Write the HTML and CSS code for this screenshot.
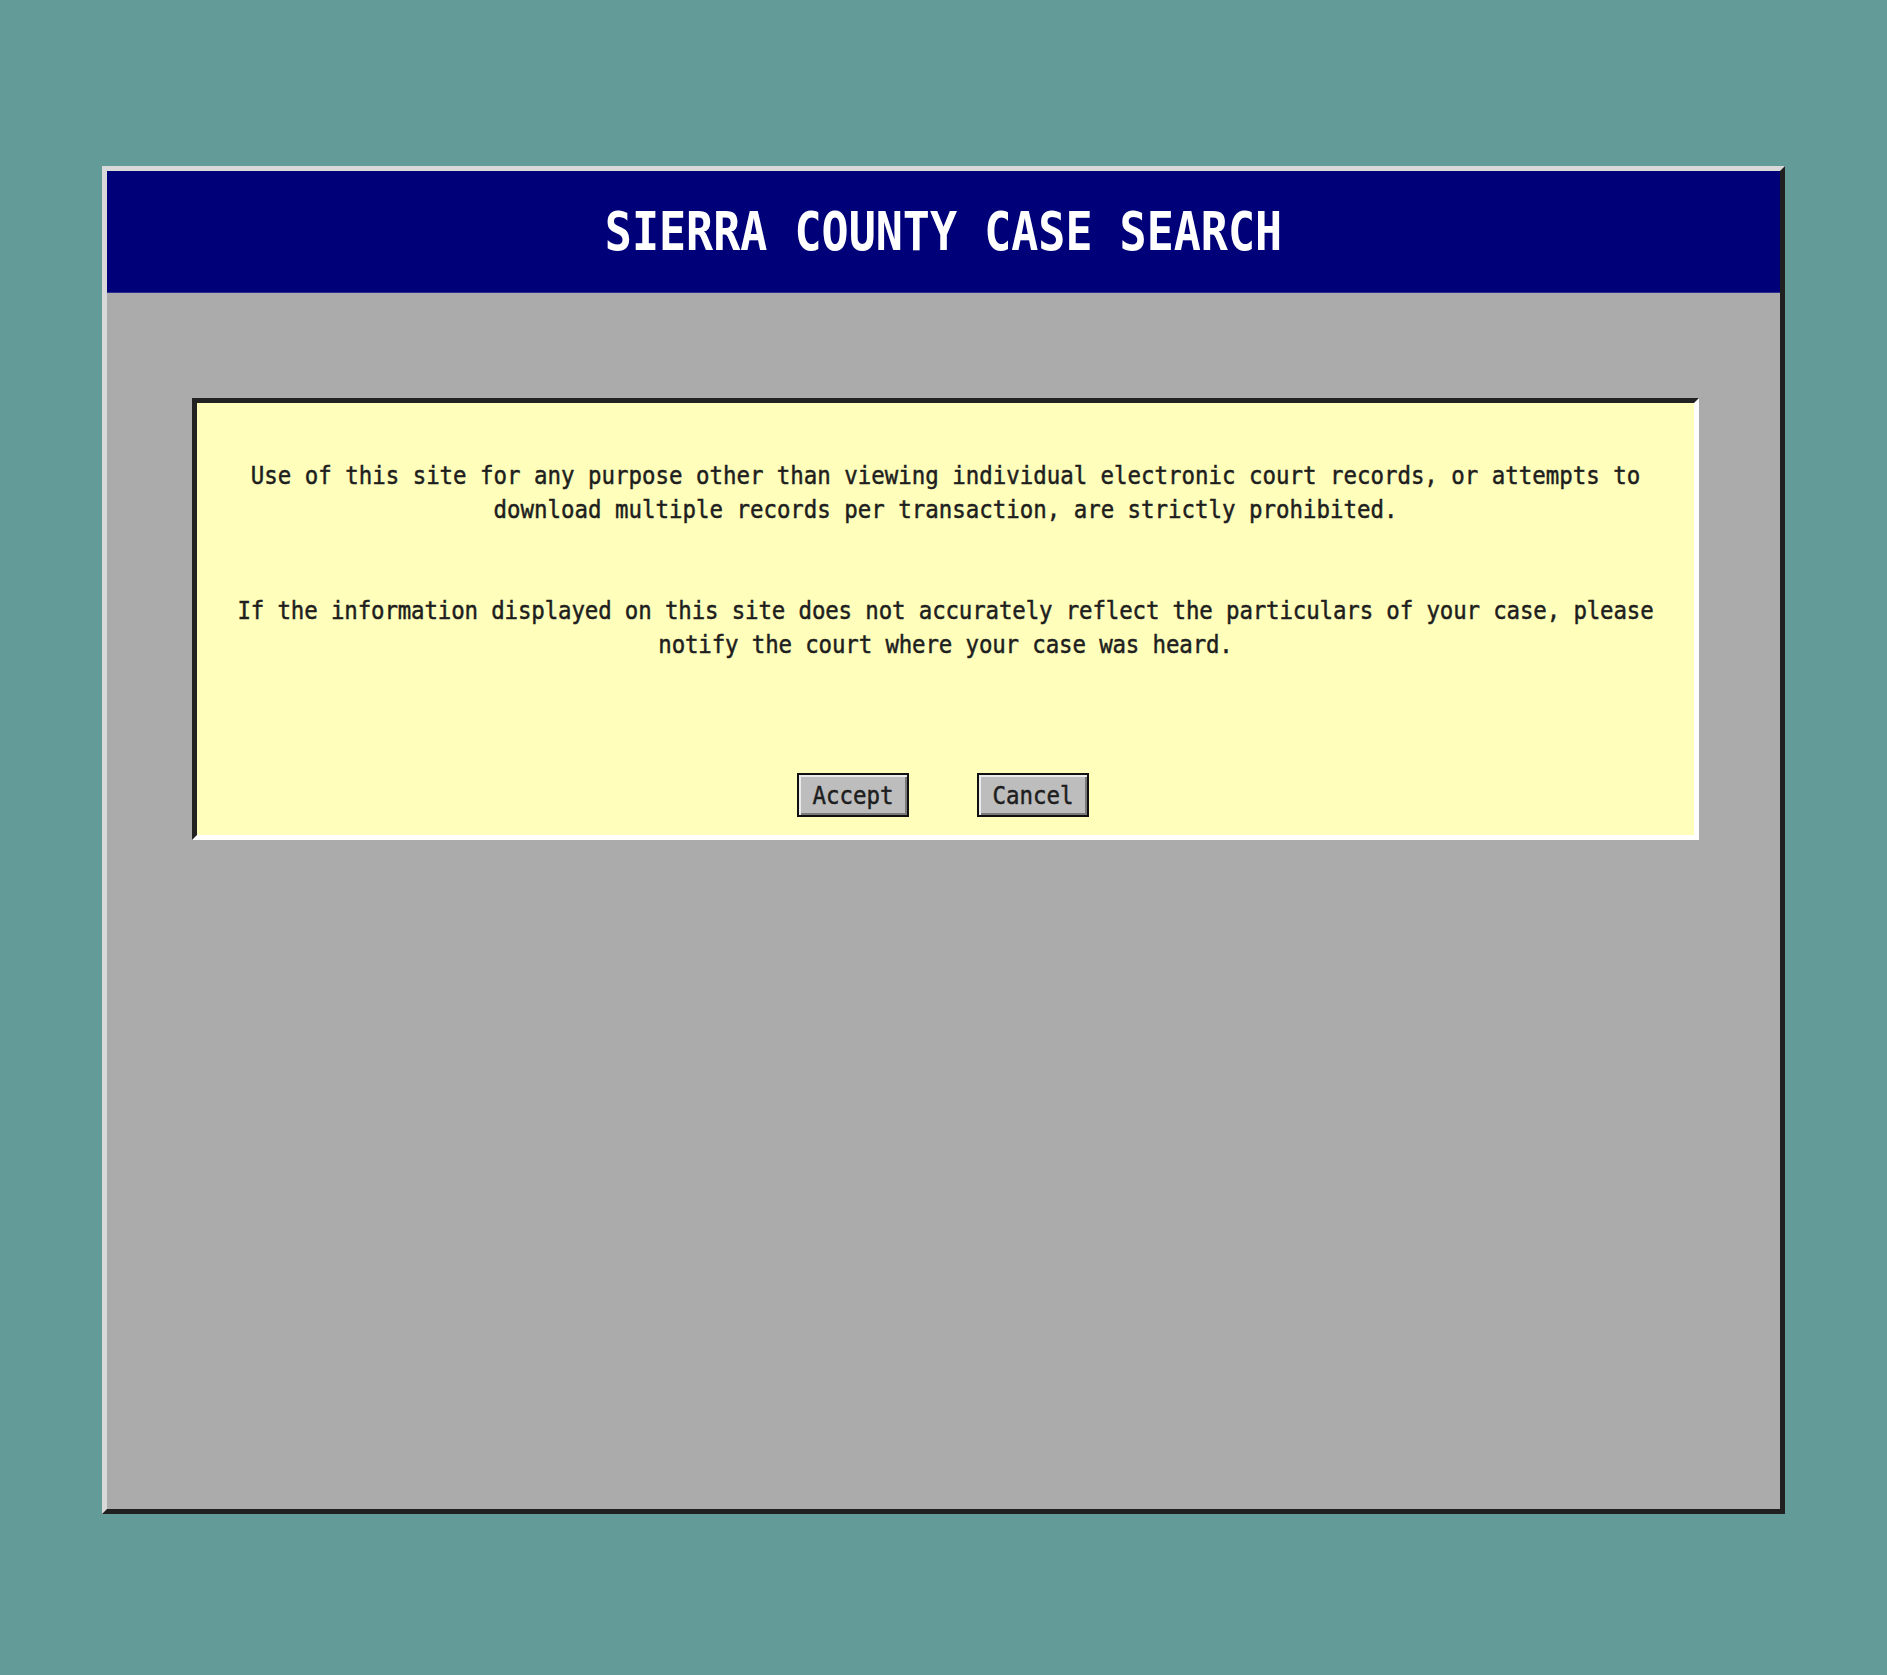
FILE: index.html
```html
<!DOCTYPE html>
<html lang="en">
<head>
<meta charset="utf-8">
<title>Sierra County Case Search</title>
<link rel="stylesheet" href="styles.css">
</head>
<body>
<div class="window">
  <div class="titlebar">
    <h1 class="title">SIERRA COUNTY CASE SEARCH</h1>
  </div>
  <div class="content">
    <div class="notice">
      <p class="msg first">Use of this site for any purpose other than viewing individual electronic court records, or attempts to download multiple records per transaction, are strictly prohibited.</p>
      <p class="msg second">If the information displayed on this site does not accurately reflect the particulars of your case, please notify the court where your case was heard.</p>
      <div class="actions">
        <button class="btn" type="button"><span class="btn-label">Accept</span></button>
        <button class="btn" type="button"><span class="btn-label">Cancel</span></button>
      </div>
    </div>
  </div>
</div>
</body>
</html>
```
FILE: styles.css
```css
html {
  background: #629b98;
}
body {
  margin: 0;
  min-height: 1675px;
  background: #629b98;
  font-family: "DejaVu Sans Mono", "Liberation Mono", monospace;
  color: #1e1e1e;
}
.window {
  margin: 166px 0 0 102px;
  width: 1683px;
  height: 1348px;
  box-sizing: border-box;
  border-style: solid;
  border-width: 5px;
  border-color: #d9d9d9 #202020 #202020 #d9d9d9;
  background: #ababab;
}
.titlebar {
  height: 122px;
  box-sizing: border-box;
  background: #000078;
  border-bottom: 1px solid #2c2c8c;
  display: flex;
  align-items: center;
  justify-content: center;
}
.title {
  margin: 0;
  font-family: "DejaVu Sans Mono", "Liberation Mono", monospace;
  font-weight: bold;
  font-size: 45px;
  line-height: 1;
  color: #ffffff;
  transform: scaleY(1.17);
}
.content {
  padding: 105px 81px 0 85px;
}
.notice {
  height: 442px;
  box-sizing: border-box;
  border-style: solid;
  border-width: 5px;
  border-color: #222222 #ffffff #ffffff #222222;
  background: #ffffbb;
  padding: 0 16px;
  display: flex;
  flex-direction: column;
}
.msg {
  margin: 0;
  font-size: 22.42px;
  line-height: 30px;
  text-align: center;
  transform: scaleY(1.14);
  transform-origin: top center;
  -webkit-text-stroke: 0.45px #1e1e1e;
}
.first {
  margin-top: 55px;
}
.second {
  margin-top: 75px;
  letter-spacing: -0.13px;
}
.actions {
  margin-top: 120px;
  display: flex;
  justify-content: center;
  gap: 68px;
  padding-right: 5px;
}
.btn {
  width: 112px;
  height: 44px;
  box-sizing: border-box;
  padding: 0;
  margin: 0;
  border: 2px solid #111111;
  background: #bdbdbd;
  box-shadow: inset 2px 2px 0 #ececec, inset -2px -2px 0 #7a7a7a;
  font-family: "DejaVu Sans Mono", "Liberation Mono", monospace;
  font-size: 22.42px;
  color: #1e1e1e;
  display: flex;
  align-items: center;
  justify-content: center;
}
.btn-label {
  display: inline-block;
  transform: scaleY(1.12);
  -webkit-text-stroke: 0.45px #1e1e1e;
}
```
